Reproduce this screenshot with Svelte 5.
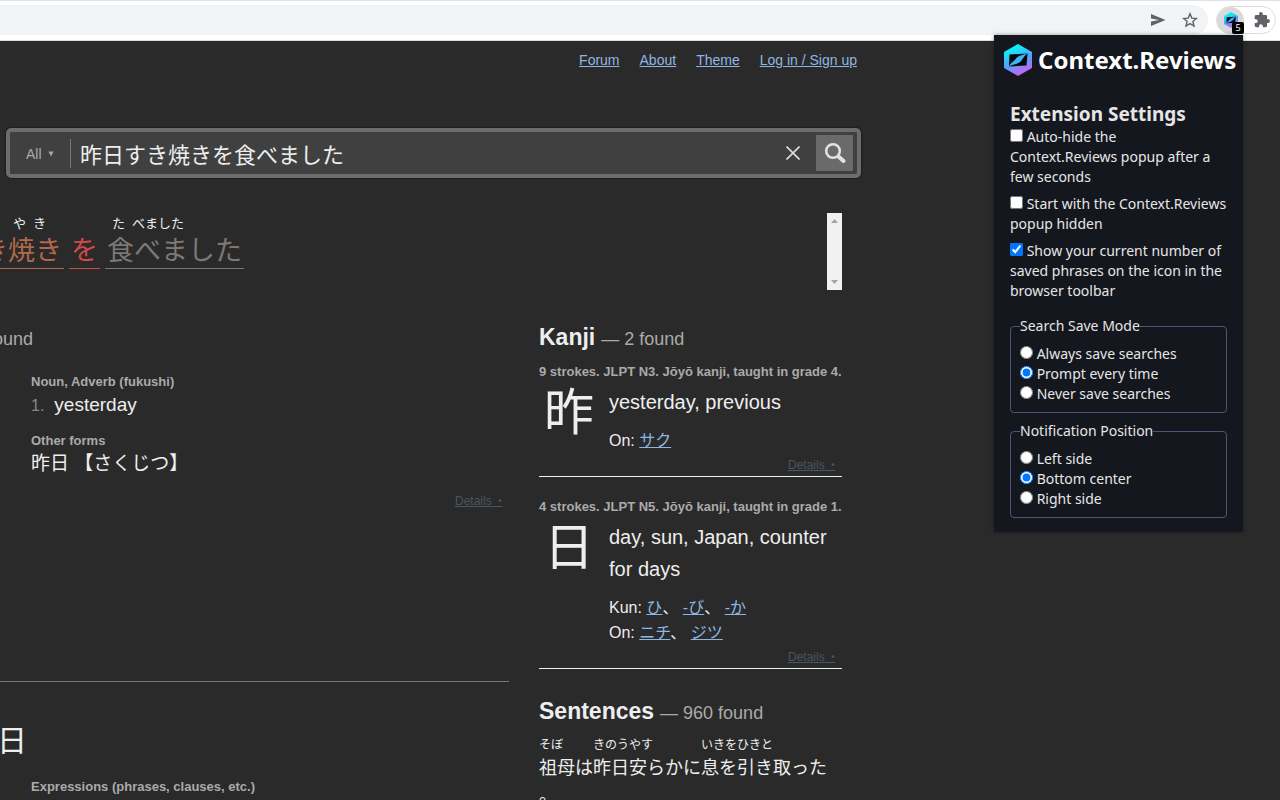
<script lang="ts">
    let query = '昨日すき焼きを食べました';
    let scope = 'All';
    let saveMode = 'prompt';
    let position = 'center';

    let toggles = [
        {label: 'Auto-hide the Context.Reviews popup after a few seconds', checked: false},
        {label: 'Start with the Context.Reviews popup hidden', checked: false},
        {label: 'Show your current number of saved phrases on the icon in the browser toolbar', checked: true},
    ];

    const saveModes = [
        {value: 'always', label: 'Always save searches'},
        {value: 'prompt', label: 'Prompt every time'},
        {value: 'never', label: 'Never save searches'},
    ];

    const positions = [
        {value: 'left', label: 'Left side'},
        {value: 'center', label: 'Bottom center'},
        {value: 'right', label: 'Right side'},
    ];

    const navLinks = ['Forum', 'About', 'Theme', 'Log in / Sign up'];

    // each part is a run of text with its furigana pieces on top
    const words = [
        {kind: 'noun', parts: [{text: 'すき', furi: []}, {text: '焼き', furi: ['や', 'き']}]},
        {kind: 'particle', parts: [{text: 'を', furi: []}]},
        {kind: 'verb', parts: [{text: '食べました', furi: ['た', 'べました']}]},
    ];

    const kanji = [
        {
            char: '昨',
            info: '9 strokes. JLPT N3. Jōyō kanji, taught in grade 4.',
            meaning: 'yesterday, previous',
            readings: [{type: 'On', list: ['サク']}],
        },
        {
            char: '日',
            info: '4 strokes. JLPT N5. Jōyō kanji, taught in grade 1.',
            meaning: 'day, sun, Japan, counter for days',
            readings: [{type: 'Kun', list: ['ひ', '-び', '-か']}, {type: 'On', list: ['ニチ', 'ジツ']}],
        },
    ];

    const sentence = [
        {text: '祖母は', furi: 'そぼ'},
        {text: '昨日安らかに', furi: 'きのうやす'},
        {text: '息を引き取った', furi: 'いきをひきと'},
        {text: '。', furi: ''},
    ];
</script>

<style>
    :global(body) {
        background: #2a2a2a;
    }

    .window {
        position: relative;
        height: 100vh;
        overflow: hidden;
        color: #eee;
        font-family: "Liberation Sans", "Noto Sans CJK JP", sans-serif;
    }

    a {
        color: #8fb6e2;
    }

    svg {
        flex: none;
    }

    button {
        border: 0;
        padding: 0;
        background: none;
        display: flex;
        align-items: center;
        justify-content: center;
        cursor: pointer;
    }

    h1, h2, p {
        margin: 0;
    }

    /* browser toolbar */
    .toolbar {
        box-sizing: border-box;
        height: 41px;
        display: flex;
        align-items: center;
        gap: 8px;
        padding: 0 4px 1px 0;
        background: #fff;
        border-top: 1px solid #dee1e6;
        border-bottom: 1px solid #dadce0;
    }

    .address {
        flex: 1;
        height: 30px;
        display: flex;
        align-items: center;
        justify-content: flex-end;
        gap: 16px;
        padding-right: 10px;
        background: #f1f3f4;
        border-radius: 0 15px 15px 0;
    }

    .extensions {
        box-sizing: border-box;
        width: 60px;
        height: 28px;
        display: flex;
        align-items: center;
        gap: 10px;
        border: 1px solid #dadce0;
        border-radius: 14px;
    }

    .ext {
        position: relative;
        width: 27px;
        height: 27px;
        border-radius: 50%;
        background: #d9d9d9;
    }

    .badge {
        position: absolute;
        right: 0;
        bottom: 0;
        width: 12px;
        height: 12px;
        border-radius: 2px;
        background: #000;
        color: #fff;
        font: 9px/12px "Noto Sans", sans-serif;
        text-align: center;
    }

    /* dictionary page */
    .site {
        max-width: 861px;
    }

    nav {
        display: flex;
        justify-content: flex-end;
        gap: 20px;
        padding: 9px 4px 0 0;
        font-size: 14px;
        line-height: 20px;
    }

    .search {
        box-sizing: border-box;
        height: 50px;
        display: flex;
        align-items: center;
        margin: 58px 0 0 6px;
        padding-right: 4px;
        border: 4px solid #6c6c6c;
        border-radius: 5px;
        background: #404040;
        box-shadow: 0 0 2px #000;
    }

    .scope {
        display: flex;
        align-items: center;
        gap: 6px;
        padding: 1px 16px 0;
        height: 28px;
        border-right: 1px solid #777;
    }

    .scope select {
        appearance: none;
        border: 0;
        padding: 0;
        background: none;
        color: #aaa;
        font: 14px/20px "Liberation Sans", sans-serif;
    }

    .search input {
        flex: 1;
        min-width: 0;
        border: 0;
        padding: 0 9px;
        background: none;
        outline: none;
        color: #eee;
        font: 22px/32px "Noto Sans CJK JP", sans-serif;
    }

    .clear {
        width: 46px;
        height: 36px;
    }

    .go {
        width: 37px;
        height: 36px;
        background: #6a6a6a;
    }

    .analysis {
        display: flex;
        justify-content: space-between;
        height: 77px;
        margin: 35px 19px 0 -48px;
    }

    .words {
        display: flex;
        align-items: flex-start;
        gap: 5px;
        font-family: "Noto Sans CJK JP", sans-serif;
    }

    .word {
        display: flex;
        padding: 0 2px 4px;
        border-bottom: 1px solid currentColor;
        font-size: 27px;
        line-height: 31px;
    }

    .furi {
        display: flex;
        gap: 7px;
        height: 20px;
        padding-left: 5px;
        color: #eee;
        font-size: 13px;
        line-height: 20px;
        white-space: nowrap;
    }

    .noun { color: #b0694a; }
    .particle { color: #d04848; }
    .verb { color: #7c7876; }

    .scrollbar {
        width: 15px;
        box-sizing: border-box;
        display: flex;
        flex-direction: column;
        align-items: center;
        justify-content: space-between;
        padding: 6px 0;
        background: #f1f1f1;
    }

    .results {
        display: grid;
        grid-template-columns: minmax(0, 1fr) 303px;
        gap: 30px;
        margin: 35px 19px 0 -120px;
    }

    h2 {
        font-size: 23px;
        line-height: 24px;
    }

    h2 span {
        margin-left: 6px;
        color: #aaa;
        font-size: 18px;
        font-weight: 400;
    }

    .primary h2 {
        width: 153px;
        display: flex;
        align-items: baseline;
        justify-content: flex-end;
        white-space: nowrap;
    }

    .concept {
        display: grid;
        grid-template-columns: 147px minmax(0, 1fr);
        column-gap: 4px;
        margin-top: 21px;
    }

    .first {
        height: 309px;
        border-bottom: 1px solid #777;
    }

    .second {
        margin-top: 37px;
    }

    .reading {
        font: 30px/38px "Noto Sans CJK JP", sans-serif;
        text-align: right;
    }

    .second .tags {
        margin-top: 58px;
    }

    .tags {
        color: #aaa;
        font-size: 13px;
        font-weight: 700;
        line-height: 20px;
        white-space: nowrap;
    }

    .sense {
        display: flex;
        align-items: baseline;
        gap: 10px;
        margin: 1px 0 13px;
        font-size: 19px;
        line-height: 24px;
    }

    .sense span {
        color: #888;
        font-size: 16px;
    }

    .forms {
        font-size: 19px;
        line-height: 26px;
    }

    .details {
        display: block;
        width: 50px;
        margin: 4px 4px 3px auto;
        color: #4b5560;
        font-size: 12px;
        line-height: 16px;
        white-space: pre;
    }

    .first .details {
        margin-top: 16px;
    }

    .kanji {
        border-bottom: 1px solid #eee;
        margin-bottom: 20px;
    }

    .kanji .tags {
        padding-bottom: 4px;
    }

    .kanji-body {
        display: grid;
        grid-template-columns: 60px minmax(0, 1fr);
        column-gap: 10px;
    }

    .char {
        font: 50px/44px "Noto Sans CJK JP", sans-serif;
        text-align: center;
    }

    .meaning {
        margin-bottom: 10px;
        font-size: 20px;
        line-height: 32px;
    }

    .readings {
        font-size: 16px;
        line-height: 25px;
    }

    .kanji-list {
        margin: 11px 0 30px;
    }

    .sentence {
        display: flex;
        flex-wrap: wrap;
        margin-top: 10px;
        font: 18px/27px "Noto Sans CJK JP", sans-serif;
    }

    .sentence small {
        display: block;
        font-size: 12px;
        line-height: 18px;
    }

    /* extension popup */
    .popup {
        position: absolute;
        top: 35px;
        right: 37px;
        box-sizing: border-box;
        width: 249px;
        padding: 9px 16px 14px;
        background: #15171e;
        box-shadow: 0 0 4px rgba(0, 0, 0, 0.4);
        color: #e6e6e6;
        font: 14px/20px "Noto Sans", sans-serif;
    }

    .brand {
        display: flex;
        align-items: center;
        gap: 4px;
        margin: 0 -8px 25px;
        color: #fff;
    }

    .brand h1 {
        font-size: 24px;
        line-height: 32px;
    }

    .popup h2 {
        font-size: 19px;
        line-height: 26px;
    }

    .toggle {
        display: block;
        margin-bottom: 7px;
    }

    .popup input {
        width: 13px;
        height: 13px;
        margin: 0;
    }

    fieldset {
        margin: 15px 0 0;
        padding: 8px 9px;
        border: 1px solid #4d5679;
        border-radius: 4px;
    }

    fieldset + fieldset {
        margin-top: 8px;
    }

    legend {
        padding: 0;
    }

    fieldset label {
        display: block;
    }
</style>

{#snippet logo(size)}
    <svg width={size} height={size} viewBox="0 0 32 32" aria-hidden="true">
        <defs>
            <linearGradient id="hex{size}" x1="0.3" y1="0" x2="0.7" y2="1">
                <stop offset="0.1" stop-color="#08f4f6" />
                <stop offset="0.5" stop-color="#4aa8f8" />
                <stop offset="1" stop-color="#dc55f5" />
            </linearGradient>
        </defs>
        <path fill="url(#hex{size})" d="M16 0 30 8V24L16 32 2 24V8Z" />
        <path fill="#07080c" d="M7.500 10.500 25.500 9.500 24.500 21.500 7 22.500Z" />
        <path fill="#3db4f8" d="M7 22.500C9 18 12 17.500 14 14.500 16.500 11.500 20 11 25.500 9.500 21.500 12.500 21.500 14.500 18.500 17.500 15.500 20.500 12 20 7 22.500Z" />
    </svg>
{/snippet}

{#snippet details()}
    <a class="details" href="#details">Details  ‣ </a>
{/snippet}

<div class="window">
    <header class="toolbar">
        <div class="address">
            <button aria-label="Send">
                <svg width="16" height="16" viewBox="0 0 16 16"><path fill="#5f6368" d="M1 2 15.500 8 1 14V9.500L9 8 1 6.500Z" /></svg>
            </button>
            <button aria-label="Bookmark">
                <svg width="16" height="16" viewBox="0 0 16 16"><path fill="none" stroke="#5f6368" stroke-width="1.400" d="M8 1.800 9.800 6.100 14.400 6.500 10.900 9.500 12 14 8 11.600 4 14 5.100 9.500 1.600 6.500 6.200 6.100Z" /></svg>
            </button>
        </div>
        <div class="extensions">
            <button class="ext" aria-label="Context.Reviews">
                {@render logo(16)}
                <span class="badge">5</span>
            </button>
            <button aria-label="Extensions">
                <svg width="16" height="16" viewBox="1 1 22 22"><path fill="#5f6368" d="M20.500 11H19V7a2 2 0 0 0-2-2h-4V3.500a2.500 2.500 0 0 0-5 0V5H4a2 2 0 0 0-2 2v3.800h1.500a2.700 2.700 0 0 1 0 5.400H2V20a2 2 0 0 0 2 2h3.800v-1.500a2.700 2.700 0 0 1 5.400 0V22H17a2 2 0 0 0 2-2v-4h1.500a2.500 2.500 0 0 0 0-5Z" /></svg>
            </button>
        </div>
    </header>

    <main class="site">
        <nav>
            {#each navLinks as link}
                <a href="#nav">{link}</a>
            {/each}
        </nav>

        <form class="search" on:submit|preventDefault>
            <label class="scope">
                <select bind:value={scope} aria-label="Search type">
                    <option>All</option>
                </select>
                <svg width="6" height="6" viewBox="0 0 6 6"><path fill="#aaa" d="M0.500 0.500H5.500L3 5.500Z" /></svg>
            </label>
            <input type="text" bind:value={query} aria-label="Search" />
            <button class="clear" type="button" aria-label="Clear">
                <svg width="14" height="14" viewBox="0 0 14 14"><path stroke="#ddd" stroke-width="1.600" d="M0.500 0.500 13.500 13.500M13.500 0.500 0.500 13.500" /></svg>
            </button>
            <button class="go" aria-label="Search">
                <svg width="22" height="22" viewBox="0 0 22 22" fill="none" stroke="#e2e2e2"><circle cx="9" cy="9" r="6.800" stroke-width="2.600" /><path stroke-width="4" stroke-linecap="round" d="M15 15 19.500 19" /></svg>
            </button>
        </form>

        <section class="analysis">
            <div class="words">
                {#each words as word}
                    <div class="word {word.kind}">
                        {#each word.parts as part}
                            <div>
                                <div class="furi">
                                    {#each part.furi as piece}<span>{piece}</span>{/each}
                                </div>
                                {part.text}
                            </div>
                        {/each}
                    </div>
                {/each}
            </div>
            <div class="scrollbar" aria-hidden="true">
                <svg width="7" height="4" viewBox="0 0 7 4"><path fill="#a3a3a3" d="M0 4 3.500 0 7 4Z" /></svg>
                <svg width="7" height="4" viewBox="0 0 7 4"><path fill="#a3a3a3" d="M0 0 3.500 4 7 0Z" /></svg>
            </div>
        </section>

        <div class="results">
            <section class="primary">
                <h2>Words<span>— 1 found</span></h2>
                <article class="concept first">
                    <div></div>
                    <div>
                        <p class="tags">Noun, Adverb (fukushi)</p>
                        <p class="sense"><span>1.</span>yesterday</p>
                        <p class="tags">Other forms</p>
                        <p class="forms">昨日 【さくじつ】</p>
                        {@render details()}
                    </div>
                </article>
                <article class="concept second">
                    <div class="reading">昨日</div>
                    <p class="tags">Expressions (phrases, clauses, etc.)</p>
                </article>
            </section>

            <aside>
                <h2>Kanji<span>— 2 found</span></h2>
                <div class="kanji-list">
                    {#each kanji as entry}
                        <article class="kanji">
                            <p class="tags">{entry.info}</p>
                            <div class="kanji-body">
                                <div class="char">{entry.char}</div>
                                <div>
                                    <p class="meaning">{entry.meaning}</p>
                                    {#each entry.readings as reading}
                                        <p class="readings">
                                            {reading.type}:
                                            {#each reading.list as kana, i}<a href="#kana">{kana}</a>{i < reading.list.length - 1 ? '、 ' : ''}{/each}
                                        </p>
                                    {/each}
                                </div>
                            </div>
                            {@render details()}
                        </article>
                    {/each}
                </div>

                <h2>Sentences<span>— 960 found</span></h2>
                <p class="sentence">
                    {#each sentence as part}
                        <span>{#if part.furi}<small>{part.furi}</small>{/if}{part.text}</span>
                    {/each}
                </p>
            </aside>
        </div>
    </main>

    <section class="popup">
        <div class="brand">
            {@render logo(32)}
            <h1>Context.Reviews</h1>
        </div>
        <h2>Extension Settings</h2>
        {#each toggles as toggle}
            <label class="toggle"><input type="checkbox" bind:checked={toggle.checked} /> {toggle.label}</label>
        {/each}
        <fieldset>
            <legend>Search Save Mode</legend>
            {#each saveModes as mode}
                <label><input type="radio" bind:group={saveMode} value={mode.value} /> {mode.label}</label>
            {/each}
        </fieldset>
        <fieldset>
            <legend>Notification Position</legend>
            {#each positions as pos}
                <label><input type="radio" bind:group={position} value={pos.value} /> {pos.label}</label>
            {/each}
        </fieldset>
    </section>
</div>
